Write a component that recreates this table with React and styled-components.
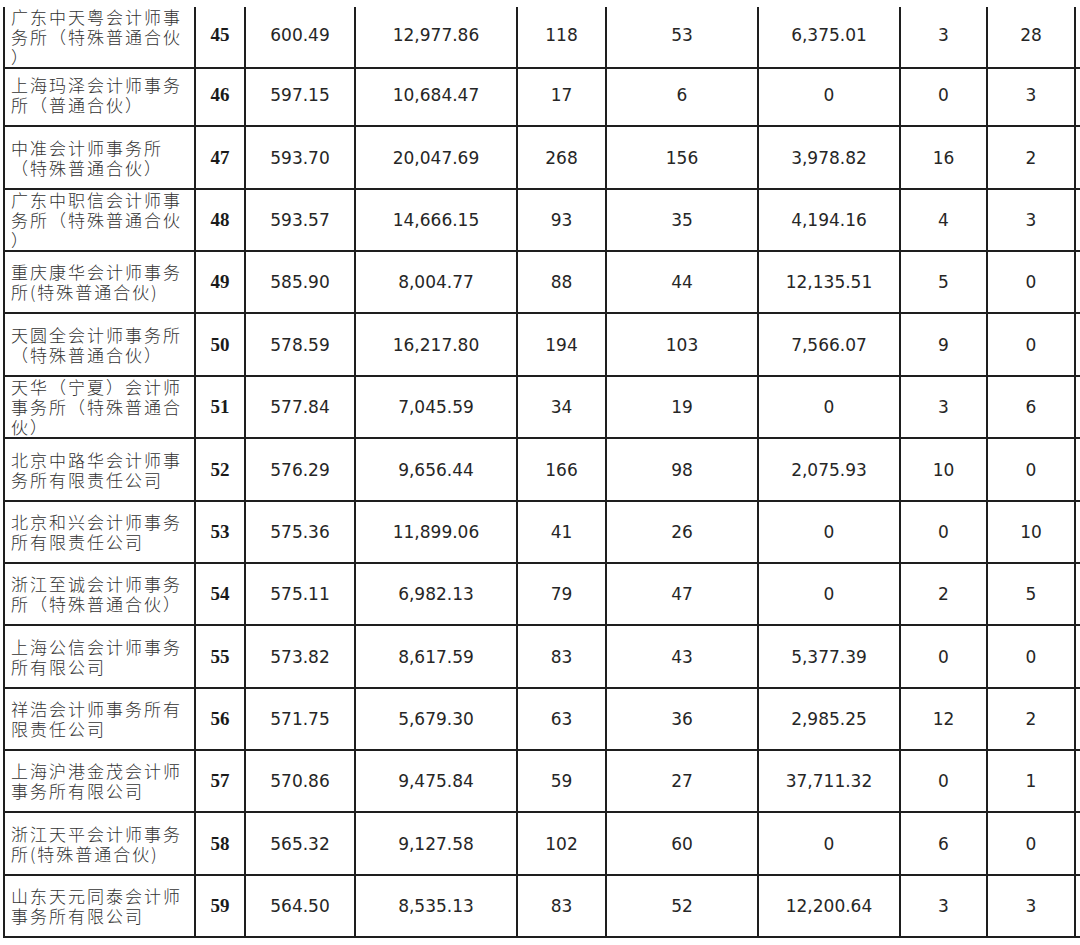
import React from "react";
import styled, { createGlobalStyle } from "styled-components";

const GlobalStyle = createGlobalStyle`
  html, body {
    margin: 0;
    padding: 0;
    background: #ffffff;
    overflow: hidden;
  }
`;

const COLUMNS = "191px 50px 110px 162px 89px 152px 142px 87px 88px 100px";

const Page = styled.div`
  width: 1080px;
  height: 945px;
  overflow: hidden;
  padding: 7px 0 0 3px;
  box-sizing: border-box;
`;

const Table = styled.div`
  display: flex;
  flex-direction: column;
  width: max-content;
`;

const Row = styled.div`
  display: grid;
  grid-template-columns: ${COLUMNS};
  height: ${({ $h }) => $h}px;
`;

const Cell = styled.div`
  box-sizing: border-box;
  border-left: 2px solid #1e1e1e;
  border-bottom: 2px solid #1e1e1e;
  display: flex;
  align-items: center;
  justify-content: center;
  overflow: hidden;
  padding-bottom: ${({ $lift }) => ($lift ? 5 : 0)}px;
  font-family: "DejaVu Sans", sans-serif;
  font-size: 17px;
  color: #262626;
`;

const NameCell = styled(Cell)`
  justify-content: flex-start;
  padding-left: 6px;
  overflow: visible;
`;

const Name = styled.div`
  font-family: "Noto Sans CJK SC", "Noto Sans", sans-serif;
  font-weight: 300;
  font-size: 17px;
  line-height: 20px;
  letter-spacing: 2px;
  color: #333333;
  white-space: pre;
`;

const RankCell = styled(Cell)`
  font-family: "Liberation Serif", "Noto Sans CJK SC", serif;
  font-weight: 700;
  font-size: 19px;
  color: #1a1a1a;
`;

const rows = [
  ["广东中天粤会计师事\n务所（特殊普通合伙\n）", "45", "600.49", "12,977.86", "118", "53", "6,375.01", "3", "28"],
  ["上海玛泽会计师事务\n所（普通合伙）", "46", "597.15", "10,684.47", "17", "6", "0", "0", "3"],
  ["中准会计师事务所\n（特殊普通合伙）", "47", "593.70", "20,047.69", "268", "156", "3,978.82", "16", "2"],
  ["广东中职信会计师事\n务所（特殊普通合伙\n）", "48", "593.57", "14,666.15", "93", "35", "4,194.16", "4", "3"],
  ["重庆康华会计师事务\n所(特殊普通合伙)", "49", "585.90", "8,004.77", "88", "44", "12,135.51", "5", "0"],
  ["天圆全会计师事务所\n（特殊普通合伙）", "50", "578.59", "16,217.80", "194", "103", "7,566.07", "9", "0"],
  ["天华（宁夏）会计师\n事务所（特殊普通合\n伙）", "51", "577.84", "7,045.59", "34", "19", "0", "3", "6"],
  ["北京中路华会计师事\n务所有限责任公司", "52", "576.29", "9,656.44", "166", "98", "2,075.93", "10", "0"],
  ["北京和兴会计师事务\n所有限责任公司", "53", "575.36", "11,899.06", "41", "26", "0", "0", "10"],
  ["浙江至诚会计师事务\n所（特殊普通合伙）", "54", "575.11", "6,982.13", "79", "47", "0", "2", "5"],
  ["上海公信会计师事务\n所有限公司", "55", "573.82", "8,617.59", "83", "43", "5,377.39", "0", "0"],
  ["祥浩会计师事务所有\n限责任公司", "56", "571.75", "5,679.30", "63", "36", "2,985.25", "12", "2"],
  ["上海沪港金茂会计师\n事务所有限公司", "57", "570.86", "9,475.84", "59", "27", "37,711.32", "0", "1"],
  ["浙江天平会计师事务\n所(特殊普通合伙)", "58", "565.32", "9,127.58", "102", "60", "0", "6", "0"],
  ["山东天元同泰会计师\n事务所有限公司", "59", "564.50", "8,535.13", "83", "52", "12,200.64", "3", "3"],
];

// rows are ~62.36px apart; first row is cut off at the top of the shot
const rowHeight = (i) => {
  if (i === 0) return 58;
  const start = 58 + (i - 1) * 62.36;
  return Math.round(start + 62.36) - Math.round(start);
};

const App = () => {
  return (
    <>
      <GlobalStyle />
      <Page>
        <Table>
          {rows.map((r, i) => {
            const [name, rank, ...nums] = r;
            const lift = i === 0;
            return (
              <Row key={rank} $h={rowHeight(i)}>
                <NameCell>
                  <Name>{name}</Name>
                </NameCell>
                <RankCell $lift={lift}>{rank}</RankCell>
                {nums.map((n, j) => (
                  <Cell key={j} $lift={lift}>
                    {n}
                  </Cell>
                ))}
                <Cell />
              </Row>
            );
          })}
        </Table>
      </Page>
    </>
  );
};

export default App;
